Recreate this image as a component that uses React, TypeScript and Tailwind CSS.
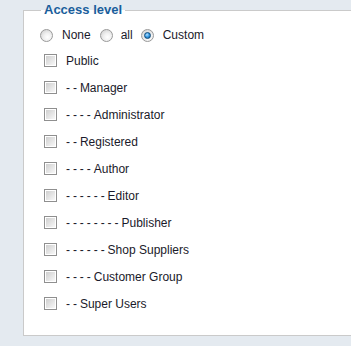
import React from "react";

const groups: { label: string; depth: number }[] = [
  { label: "Public", depth: 0 },
  { label: "Manager", depth: 1 },
  { label: "Administrator", depth: 2 },
  { label: "Registered", depth: 1 },
  { label: "Author", depth: 2 },
  { label: "Editor", depth: 3 },
  { label: "Publisher", depth: 4 },
  { label: "Shop Suppliers", depth: 3 },
  { label: "Customer Group", depth: 2 },
  { label: "Super Users", depth: 1 },
];

function Radio({ checked }: { checked?: boolean }) {
  return (
    <span className="relative flex h-[13px] w-[13px] shrink-0 items-center justify-center rounded-full border border-[#9a9a9a] bg-[radial-gradient(circle_at_60%_65%,#ffffff_0%,#f0f0f0_40%,#c9c9c9_100%)]">
      {checked && (
        <span className="h-[7px] w-[7px] rounded-full border border-[#0d4a7a] bg-[radial-gradient(circle_at_40%_35%,#b9e2ff_0%,#3d9ee6_45%,#0f5c9c_100%)]" />
      )}
    </span>
  );
}

function Checkbox() {
  return (
    <span className="flex h-[13px] w-[13px] shrink-0 border border-[#8f8f8f] bg-white p-px">
      <span className="h-full w-full bg-[linear-gradient(135deg,#cfcfcf_0%,#e3e3e3_50%,#f8f8f8_100%)]" />
    </span>
  );
}

export default function App() {
  return (
    <div
      className="h-[346px] w-[351px] overflow-hidden bg-[#e4eaf0] text-[12px] text-[#1a1a2a]"
      style={{ fontFamily: '"Liberation Sans", Arial, sans-serif' }}
    >
      <div className="pl-[23px]">
        <fieldset className="w-[420px] border border-[#cacaca] bg-white pb-[18px] pl-[16px]">
          <legend className="ml-[1px] px-[3px] text-[13px] font-bold leading-[20px] text-[#1a5e9c]">
            Access level
          </legend>
          <div className="pt-[3px]">
            <div className="flex h-[24px] items-center">
              <Radio />
              <span className="ml-[9px] mr-[9px]">None</span>
              <Radio />
              <span className="ml-[8px] mr-[8px]">all</span>
              <Radio checked />
              <span className="ml-[9px]">Custom</span>
            </div>
            {groups.map((g) => (
              <div key={g.label} className="flex h-[27px] items-center pl-[4px]">
                <Checkbox />
                <span className="ml-[9px] whitespace-pre">
                  <span className="[word-spacing:-0.4px]">{"- ".repeat(g.depth * 2)}</span>
                  {g.label}
                </span>
              </div>
            ))}
          </div>
        </fieldset>
      </div>
    </div>
  );
}
